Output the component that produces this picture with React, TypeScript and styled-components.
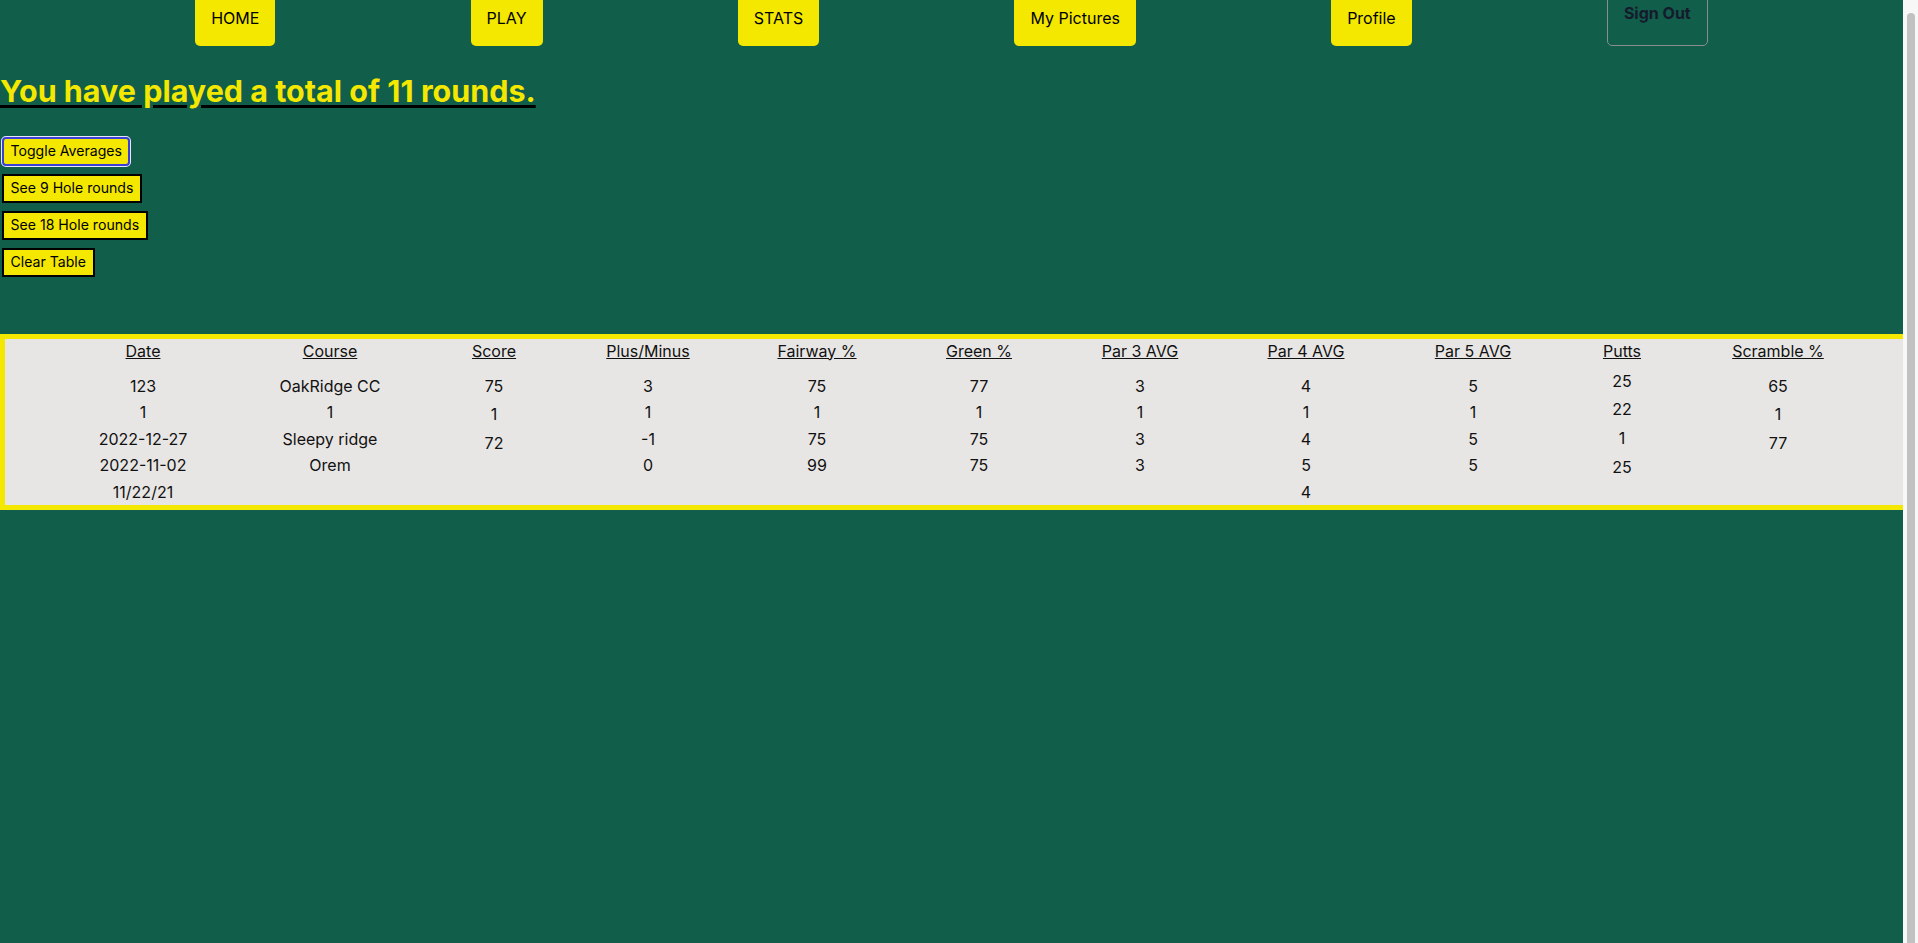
import styled, { createGlobalStyle } from 'styled-components';

const GlobalStyle = createGlobalStyle`
  html, body {
    overflow: hidden;
  }
  body {
    margin: 0;
    background-color: #115e4a;
    font-family: Inter, "Liberation Sans", sans-serif;
  }
`;

type Column = {
  title: string;
  values: string[];
  gap?: number;
  offset?: number;
};

const columns: Column[] = [
  { title: 'Date', values: ['123', '1', '2022-12-27', '2022-11-02', '11/22/21'] },
  { title: 'Course', values: ['OakRidge CC', '1', 'Sleepy ridge', 'Orem'] },
  { title: 'Score', values: ['75', '1', '72'], gap: 9.5 },
  { title: 'Plus/Minus', values: ['3', '1', '-1', '0'] },
  { title: 'Fairway %', values: ['75', '1', '75', '99'] },
  { title: 'Green %', values: ['77', '1', '75', '75'] },
  { title: 'Par 3 AVG', values: ['3', '1', '3', '3'] },
  { title: 'Par 4 AVG', values: ['4', '1', '4', '5', '4'] },
  { title: 'Par 5 AVG', values: ['5', '1', '5', '5'] },
  { title: 'Putts', values: ['25', '22', '1', '25'], gap: 9.7, offset: 11 },
  { title: 'Scramble %', values: ['65', '1', '77'], gap: 9.5 },
];

const navLinks = ['HOME', 'PLAY', 'STATS', 'My Pictures', 'Profile'];

const App = () => {
  return (
    <Page>
      <GlobalStyle />
      <Main>
        <Nav>
          {navLinks.map(link => (
            <NavButton key={link}>{link}</NavButton>
          ))}
          <SignOut>Sign Out</SignOut>
        </Nav>

        <Heading>You have played a total of 11 rounds.</Heading>

        <Controls>
          <ControlButton $focused>Toggle Averages</ControlButton>
          <ControlButton>See 9 Hole rounds</ControlButton>
          <ControlButton>See 18 Hole rounds</ControlButton>
          <ControlButton>Clear Table</ControlButton>
        </Controls>

        <StatsTable>
          {columns.map(col => (
            <StatColumn key={col.title}>
              <ColumnTitle>{col.title}</ColumnTitle>
              <CellList $gap={col.gap ?? 7.5} $offset={col.offset ?? 16}>
                {col.values.map((value, i) => (
                  <Cell key={i}>{value}</Cell>
                ))}
              </CellList>
            </StatColumn>
          ))}
        </StatsTable>
      </Main>

      <ScrollRail>
        <ScrollThumb />
      </ScrollRail>
    </Page>
  );
};

const Page = styled.div`
  display: grid;
  grid-template-columns: 1fr 15px;
  height: 100vh;
`;

const Main = styled.main`
  min-width: 0;
  overflow: hidden;
`;

const Nav = styled.nav`
  display: flex;
  justify-content: space-evenly;
  align-items: flex-end;
  margin-top: -18.5px;
`;

const NavButton = styled.button`
  background-color: #f4e800;
  color: #000;
  border: none;
  border-radius: 5px;
  padding: 18px 16px;
  font-family: Inter, "Liberation Sans", sans-serif;
  font-size: 16px;
  line-height: 19px;
  cursor: pointer;
`;

const SignOut = styled.button`
  background: transparent;
  color: #141b2d;
  border: 1px solid #8a8f8c;
  border-radius: 5px;
  padding: 21.5px 16px;
  font-family: Inter, "Liberation Sans", sans-serif;
  font-size: 16px;
  font-weight: 700;
  line-height: 19px;
  cursor: pointer;
`;

const Heading = styled.h1`
  margin: 26px 0 0;
  color: #f4e800;
  font-size: 30.5px;
  font-weight: 700;
  text-decoration: underline;
  text-decoration-color: #000;
  text-decoration-thickness: 2.5px;
  text-underline-offset: 3px;
`;

const Controls = styled.div`
  display: flex;
  flex-direction: column;
  align-items: flex-start;
  gap: 8px;
  margin: 28px 0 57px 2px;
`;

const ControlButton = styled.button<{ $focused?: boolean }>`
  background-color: #f4e800;
  color: #000;
  border: 2px solid ${props => (props.$focused ? '#3b3fd4' : '#000')};
  border-radius: ${props => (props.$focused ? '4px' : '0')};
  box-shadow: ${props => (props.$focused ? '0 0 0 1px #e6e6ff' : 'none')};
  padding: 3.5px 6.5px;
  font-family: Inter, "Liberation Sans", sans-serif;
  font-size: 14.1px;
  line-height: 18px;
  cursor: pointer;
`;

const StatsTable = styled.div`
  box-sizing: content-box;
  width: 100%;
  border: 5px solid #f4e800;
  background-color: #e8e6e4;
  padding: 2px 0 3px 50px;
  display: grid;
  grid-template-columns: 176px 198px 130px 178px 160px 164px 158px 174px 160px 138px 174px;
  color: #111;
  margin-right: -60px;
`;

const StatColumn = styled.div`
  display: flex;
  flex-direction: column;
  align-items: center;
`;

const ColumnTitle = styled.div`
  font-size: 16px;
  line-height: 20px;
  text-decoration: underline;
`;

const CellList = styled.div<{ $gap: number; $offset: number }>`
  display: flex;
  flex-direction: column;
  align-items: center;
  gap: ${props => props.$gap}px;
  padding-top: ${props => props.$offset}px;
`;

const Cell = styled.div`
  font-size: 16px;
  line-height: 19px;
`;

const ScrollRail = styled.div`
  display: flex;
  background-color: #f7f7f7;
  padding: 13px 3px 0 4px;
`;

const ScrollThumb = styled.div`
  flex: 1;
  background-color: #c1c1c1;
  border-radius: 4px 4px 0 0;
`;

export default App;
